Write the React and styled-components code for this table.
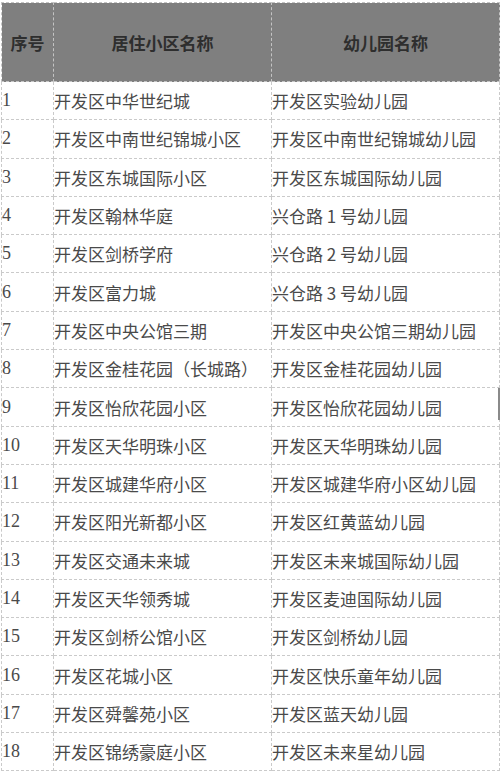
import React from 'react'
import styled, { createGlobalStyle } from 'styled-components'

const GlobalStyle = createGlobalStyle`
  body {
    margin: 0;
    background: #ffffff;
  }
`

const Page = styled.div`
  position: relative;
  width: 500px;
  height: 773px;
  padding: 2px 0 0 1px;
  box-sizing: border-box;
  overflow: hidden;
  background: #fff;
`

const Table = styled.table`
  border-collapse: collapse;
  table-layout: fixed;
  width: 498px;
`

const HeadCell = styled.th`
  height: 78px;
  padding: 0;
  background: #7f7f7f;
  border: 1px dashed #c4c4c4;
  color: #2e2e2e;
  font-family: "Noto Sans CJK SC", "Noto Sans", sans-serif;
  font-size: 17px;
  font-weight: 700;
  text-align: center;
  vertical-align: middle;
`

const Cell = styled.td`
  height: 37.3px;
  padding: 0;
  border: 1px dashed #cacaca;
  color: #4a4a4a;
  font-family: ${p => (p.$num
    ? '"Liberation Serif", serif'
    : '"Noto Sans CJK SC", "Noto Sans", sans-serif')};
  font-size: ${p => (p.$num ? '18px' : '17px')};
  white-space: nowrap;
  vertical-align: middle;
`

const ScrollMark = styled.div`
  position: absolute;
  right: 0;
  top: 388px;
  width: 2px;
  height: 32px;
  background: #8a8a8a;
`

const rows = [
  ['开发区中华世纪城', '开发区实验幼儿园'],
  ['开发区中南世纪锦城小区', '开发区中南世纪锦城幼儿园'],
  ['开发区东城国际小区', '开发区东城国际幼儿园'],
  ['开发区翰林华庭', '兴仓路 1 号幼儿园'],
  ['开发区剑桥学府', '兴仓路 2 号幼儿园'],
  ['开发区富力城', '兴仓路 3 号幼儿园'],
  ['开发区中央公馆三期', '开发区中央公馆三期幼儿园'],
  ['开发区金桂花园（长城路）', '开发区金桂花园幼儿园'],
  ['开发区怡欣花园小区', '开发区怡欣花园幼儿园'],
  ['开发区天华明珠小区', '开发区天华明珠幼儿园'],
  ['开发区城建华府小区', '开发区城建华府小区幼儿园'],
  ['开发区阳光新都小区', '开发区红黄蓝幼儿园'],
  ['开发区交通未来城', '开发区未来城国际幼儿园'],
  ['开发区天华领秀城', '开发区麦迪国际幼儿园'],
  ['开发区剑桥公馆小区', '开发区剑桥幼儿园'],
  ['开发区花城小区', '开发区快乐童年幼儿园'],
  ['开发区舜馨苑小区', '开发区蓝天幼儿园'],
  ['开发区锦绣豪庭小区', '开发区未来星幼儿园'],
]

const App = () => (
  <Page>
    <GlobalStyle />
    <Table>
      <colgroup>
        <col style={{ width: 52 }} />
        <col style={{ width: 218 }} />
        <col style={{ width: 228 }} />
      </colgroup>
      <thead>
        <tr>
          <HeadCell>序号</HeadCell>
          <HeadCell>居住小区名称</HeadCell>
          <HeadCell>幼儿园名称</HeadCell>
        </tr>
      </thead>
      <tbody>
        {rows.map((r, i) => (
          <tr key={i}>
            <Cell $num>{i + 1}</Cell>
            <Cell>{r[0]}</Cell>
            <Cell>{r[1]}</Cell>
          </tr>
        ))}
      </tbody>
    </Table>
    <ScrollMark />
  </Page>
)

export default App
